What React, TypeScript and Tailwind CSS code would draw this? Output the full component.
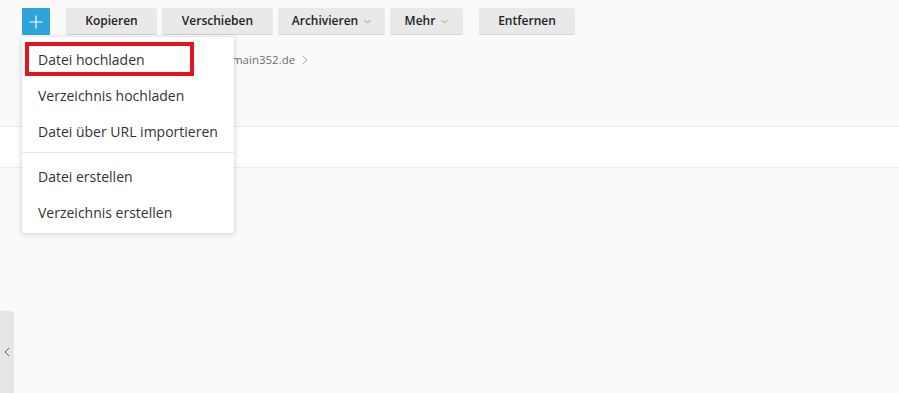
const font = { fontFamily: "'Open Sans', 'Noto Sans', sans-serif" };

interface BtnProps {
  label: string;
  width: string;
  caret?: boolean;
}

function ToolButton({ label, width, caret }: BtnProps) {
  return (
    <button
      className={`h-[27px] ${width} flex items-center justify-center gap-[6px] bg-[#e9e9e9] border-b border-[#d4d4d4] rounded-[2px] text-[12px] font-semibold text-[#222]`}
    >
      {label}
      {caret && (
        <svg width="7" height="5" viewBox="0 0 7 5" className="mt-[1px]">
          <path d="M0.5 1 L3.5 4 L6.5 1" fill="none" stroke="#999" strokeWidth="1" />
        </svg>
      )}
    </button>
  );
}

const uploadItems = ['Datei hochladen', 'Verzeichnis hochladen', 'Datei über URL importieren'];
const createItems = ['Datei erstellen', 'Verzeichnis erstellen'];

function AddMenu() {
  return (
    <div className="absolute left-[22px] top-[37px] w-[212px] bg-white rounded-[2px] shadow-[0_1px_6px_rgba(0,0,0,0.18)] pt-1 pb-[3px] z-10">
      {uploadItems.map((s) => (
        <div key={s} className="h-9 flex items-center pl-4 text-[14px] text-[#333]">
          {s}
        </div>
      ))}
      <div className="h-px bg-[#e6e6e6] mt-[3px] mb-[5px]" />
      {createItems.map((s) => (
        <div key={s} className="h-9 flex items-center pl-4 text-[14px] text-[#333]">
          {s}
        </div>
      ))}
      {/* highlight around first entry */}
      <div className="absolute left-[3px] top-[5px] w-[169px] h-[34px] border-[4px] border-[#e0161f]" />
    </div>
  );
}

export default function App() {
  return (
    <div className="relative w-[899px] h-[393px] bg-[#fafafa] overflow-hidden" style={font}>
      <div className="flex items-center pt-2 pl-[22px]">
        <button className="w-[28px] h-[27px] bg-[#2ea3dc] rounded-[1px] flex items-center justify-center">
          <svg width="14" height="14" viewBox="0 0 14 14">
            <path d="M7 0.5 V13.5 M0.5 7 H13.5" stroke="#fff" strokeWidth="1.2" />
          </svg>
        </button>
        <div className="flex gap-[5px] ml-4">
          <ToolButton label="Kopieren" width="w-[91px]" />
          <ToolButton label="Verschieben" width="w-[111px]" />
          <ToolButton label="Archivieren" width="w-[107px]" caret />
          <ToolButton label="Mehr" width="w-[73px]" caret />
        </div>
        <div className="ml-4">
          <ToolButton label="Entfernen" width="w-[96px]" />
        </div>
      </div>

      <div className="flex items-center gap-[7px] mt-[15px] ml-[218px] h-5 text-[11.5px] text-[#6f6f6f]">
        <span>domain352.de</span>
        <svg width="6" height="10" viewBox="0 0 6 10">
          <path d="M1 1 L5 5 L1 9" fill="none" stroke="#aaa" strokeWidth="1" />
        </svg>
      </div>

      <div className="mt-[56px] h-[42px] bg-white border-y border-[#ebebeb]" />

      <div className="absolute left-0 bottom-0 w-[14px] h-[82px] bg-[#e6e6e6] rounded-tr-[3px] flex items-center justify-center">
        <svg width="6" height="10" viewBox="0 0 6 10">
          <path d="M5 1 L1 5 L5 9" fill="none" stroke="#555" strokeWidth="1" />
        </svg>
      </div>

      <AddMenu />
    </div>
  );
}
